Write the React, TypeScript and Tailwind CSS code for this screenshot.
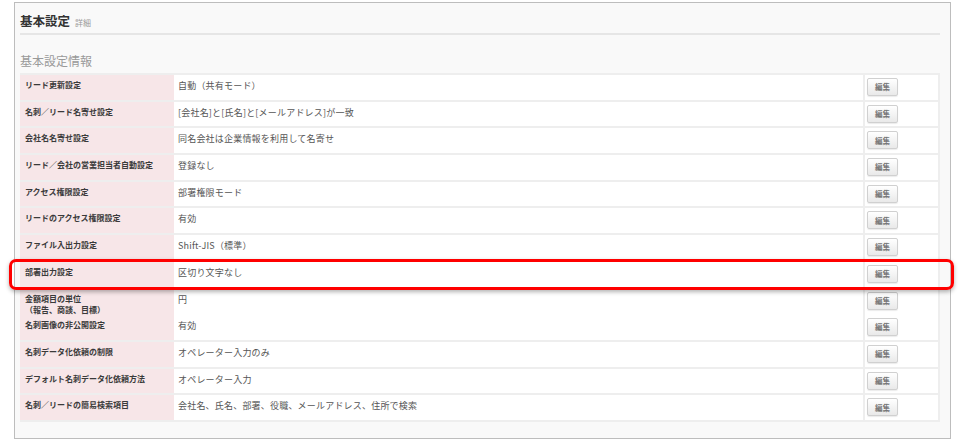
const rows: { label: string; sub?: string; value: string }[] = [
  { label: 'リード更新設定', value: '自動（共有モード）' },
  { label: '名刺／リード名寄せ設定', value: '[会社名]と[氏名]と[メールアドレス]が一致' },
  { label: '会社名名寄せ設定', value: '同名会社は企業情報を利用して名寄せ' },
  { label: 'リード／会社の営業担当者自動設定', value: '登録なし' },
  { label: 'アクセス権限設定', value: '部署権限モード' },
  { label: 'リードのアクセス権限設定', value: '有効' },
  { label: 'ファイル入出力設定', value: 'Shift-JIS（標準）' },
  { label: '部署出力設定', value: '区切り文字なし' },
  { label: '金額項目の単位', sub: '（報告、商談、目標）', value: '円' },
  { label: '名刺画像の非公開設定', value: '有効' },
  { label: '名刺データ化依頼の制限', value: 'オペレーター入力のみ' },
  { label: 'デフォルト名刺データ化依頼方法', value: 'オペレーター入力' },
  { label: '名刺／リードの簡易検索項目', value: '会社名、氏名、部署、役職、メールアドレス、住所で検索' },
];

const font = { fontFamily: '"Noto Sans CJK JP", "Noto Sans", sans-serif' };

const App = () => {
  return (
    <div className="relative h-[443px] w-[960px] bg-white" style={font}>
      <div className="absolute left-[14px] top-[2px] h-[437px] w-[937px] border border-[#bdbdbd] bg-[#f9f9f9] px-[5px]">
        <div className="flex h-[30px] items-end gap-[5px] pb-[6px]">
          <h1 className="text-[12.5px] font-bold leading-none text-[#333]">基本設定</h1>
          <span className="text-[8px] leading-none text-[#999]">詳細</span>
        </div>
        <div className="h-[2px] w-[920px] bg-[#e6e6e6]" />
        <h2 className="mt-[18px] text-[12px] leading-[16px] text-[#9a9a9a]">基本設定情報</h2>
        <div className="mt-[4px] w-[920px] border-t-2 border-[#eeeeee]">
          {rows.map((row) => (
            <div
              key={row.label}
              className="grid h-[26.7px] grid-cols-[154px_689px_77px] border-b-2 border-[#eeeeee]"
            >
              <div className="bg-[#f7e6e8] pl-[5px] pt-[4px] text-[8px] font-bold leading-[11px] text-[#3a3a3a]">
                <div>{row.label}</div>
                {row.sub ? <div>{row.sub}</div> : null}
              </div>
              <div className="bg-white pl-[4px] pt-[4px] text-[9px] leading-[13px] tracking-[0.2px] text-[#555]">{row.value}</div>
              <div className="border-x-2 border-[#eeeeee] bg-white pl-[2px] pt-[3px]">
                <button
                  type="button"
                  className="flex h-[18px] w-[31px] items-center justify-center rounded-[2px] border border-[#d0d0d0] bg-gradient-to-b from-white to-[#e9e9e9] text-[7.5px] font-bold leading-none text-[#777] shadow-[0_1px_1px_rgba(0,0,0,0.08)]"
                >
                  編集
                </button>
              </div>
            </div>
          ))}
        </div>
      </div>
      <div className="pointer-events-none absolute left-[9px] top-[259px] h-[31px] w-[945px] rounded-[7px] border-[3px] border-[#ff0000] shadow-[0_2px_4px_rgba(0,0,0,0.3)]" />
    </div>
  );
};

export default App;
